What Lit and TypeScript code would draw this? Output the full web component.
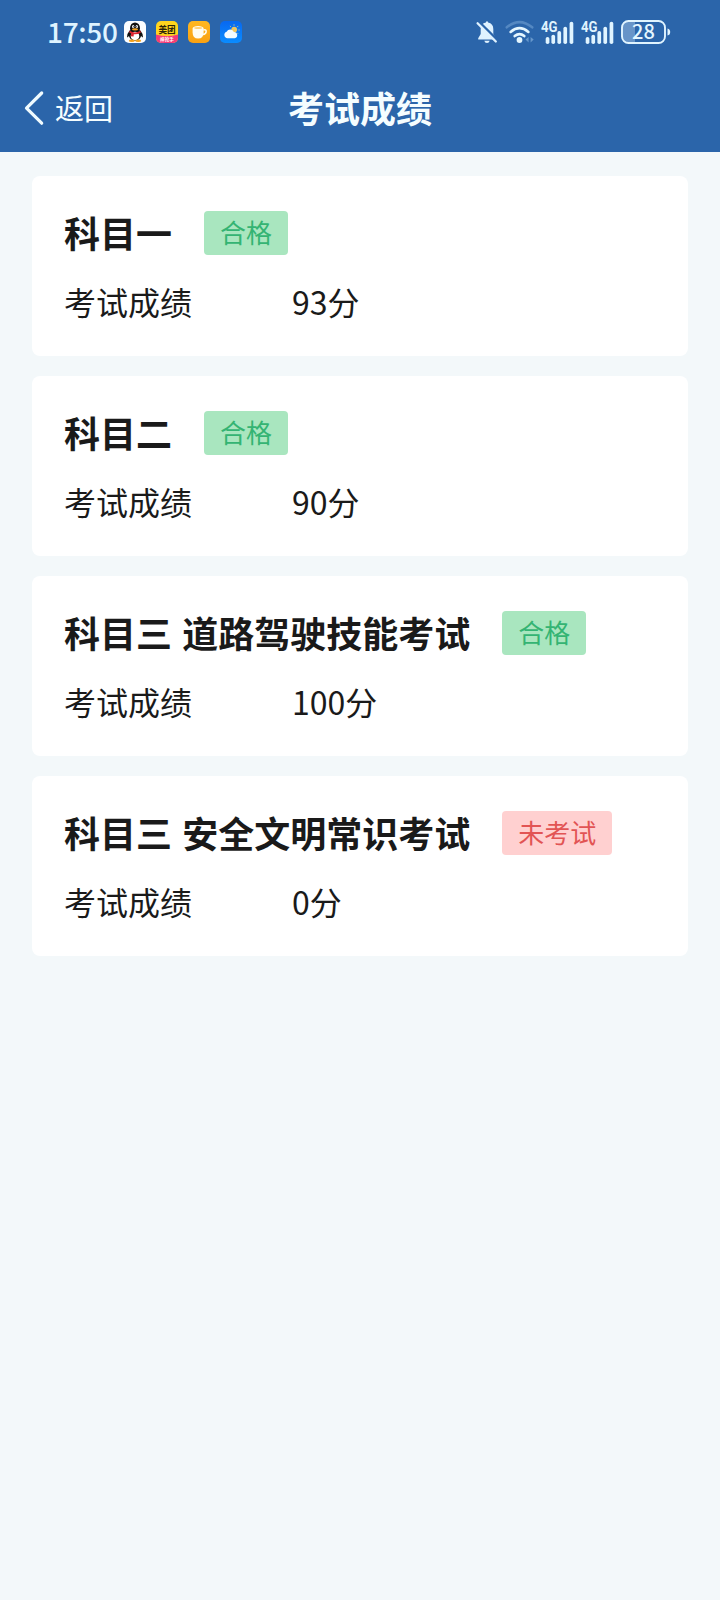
import { LitElement, html, svg, css } from "lit";
import { customElement, property } from "lit/decorators.js";

interface Exam {
  subject: string;
  status: string;
  passed: boolean;
  score: number;
}

const exams: Exam[] = [
  { subject: "科目一", status: "合格", passed: true, score: 93 },
  { subject: "科目二", status: "合格", passed: true, score: 90 },
  { subject: "科目三 道路驾驶技能考试", status: "合格", passed: true, score: 100 },
  { subject: "科目三 安全文明常识考试", status: "未考试", passed: false, score: 0 },
];

const qqIcon = html`<svg width="22" height="22" viewBox="0 0 22 22">
  <rect width="22" height="22" rx="5" fill="#fbfdff" />
  <path d="M5.600 9.500 Q2.600 13 3 16.500 Q4.500 16.200 5.200 14.500 L16.800 14.500 Q17.600 16.200 19 16.500 Q19.400 13 16.400 9.500Z" fill="#111" />
  <ellipse cx="11" cy="13.800" rx="6.200" ry="6" fill="#111" />
  <ellipse cx="11" cy="7.200" rx="5" ry="5.800" fill="#111" />
  <ellipse cx="11" cy="15" rx="4.300" ry="4.300" fill="#fff" />
  <ellipse cx="9.200" cy="5.600" rx="1.150" ry="1.600" fill="#fff" />
  <ellipse cx="12.800" cy="5.600" rx="1.150" ry="1.600" fill="#fff" />
  <circle cx="9.500" cy="5.800" r=".55" fill="#111" />
  <circle cx="12.500" cy="5.800" r=".55" fill="#111" />
  <ellipse cx="11" cy="8.400" rx="3.100" ry="1.100" fill="#f4a21c" />
  <path d="M5.600 9.800 Q11 13.200 16.400 9.800 L16.700 11.700 Q13.500 13.600 9.800 13.200 L9.600 15.600 L6.800 15.200 L7.200 12.500 Q6 12.100 5.300 11.600Z" fill="#dc2430" />
  <ellipse cx="7.800" cy="19.700" rx="3" ry="1.200" fill="#f4a21c" />
  <ellipse cx="14.200" cy="19.700" rx="3" ry="1.200" fill="#f4a21c" />
</svg>`;

const meituanIcon = html`<svg width="22" height="22" viewBox="0 0 22 22">
  <defs><clipPath id="tile"><rect width="22" height="22" rx="5" /></clipPath></defs>
  <g clip-path="url(#tile)">
    <rect width="22" height="22" fill="#ffd51e" />
    <path d="M0 13.500 Q11 16.500 22 13.500 V22 H0Z" fill="#f53a78" />
  </g>
  <text class="glyph" x="11" y="12" font-size="8.600" font-weight="700" text-anchor="middle" fill="#2b2308">美团</text>
  <text class="glyph" x="11" y="20.400" font-size="4.600" font-weight="700" text-anchor="middle" fill="#fff">神抢手</text>
</svg>`;

const cupIcon = html`<svg width="22" height="22" viewBox="0 0 22 22">
  <defs><linearGradient id="amber" x1="0" y1="0" x2="0" y2="1">
    <stop offset="0" stop-color="#ffb822" /><stop offset="1" stop-color="#f9a112" />
  </linearGradient></defs>
  <rect width="22" height="22" rx="5" fill="url(#amber)" />
  <path d="M4.600 7.500 H15.600 V11.500 Q15.600 17.600 10.100 17.600 Q4.600 17.600 4.600 11.500Z" fill="#fffdf2" />
  <ellipse cx="10.100" cy="7.200" rx="5.500" ry="2.200" fill="#fffdf2" />
  <ellipse cx="10.100" cy="7.100" rx="4" ry="1" fill="#ffd27a" />
  <path d="M15.300 9 Q18.300 8.300 18.200 10.400 Q18.100 13 14.800 13.600" fill="none" stroke="#fffdf2" stroke-width="1.500" />
</svg>`;

const weatherIcon = html`<svg width="22" height="22" viewBox="0 0 22 22">
  <defs><linearGradient id="sky" x1="0" y1="0" x2="0" y2="1">
    <stop offset="0" stop-color="#0868f0" /><stop offset="1" stop-color="#0a8cff" />
  </linearGradient></defs>
  <rect width="22" height="22" rx="5" fill="url(#sky)" />
  <g stroke="#d9bf7a" stroke-width=".9" stroke-linecap="round">
    <path d="M14 3.700v.6M18 5.200l-.5.500M19.300 9h-.6M17.800 12.500l-.4-.4M10.200 5.200l.4.400" />
  </g>
  <circle cx="14.200" cy="8.600" r="2.900" fill="#efc661" />
  <path d="M7.500 17.300 A3.400 3.400 0 0 1 6.600 10.700 A4.100 4.100 0 0 1 13.900 11 A3.200 3.200 0 0 1 14.800 17.300Z" fill="#f4fbff" />
</svg>`;

const mutedBell = html`<svg class="bell" width="22" height="24" viewBox="0 0 22 24">
  <path d="M11 1.200 Q11.900 1.200 12.100 2.400 Q17.300 3.400 17.300 9 V14 L19.800 18.200 V19.400 H2.200 V18.200 L4.700 14 V9 Q4.700 3.400 9.900 2.400 Q10.100 1.200 11 1.200Z" fill="#dff2ff" />
  <path d="M8.300 20.800 H13.700 Q13.200 23 11 23 Q8.800 23 8.300 20.800Z" fill="#dff2ff" />
  <path d="M2.800 1.600 L22 20.600" stroke="#2b65aa" stroke-width="2.600" />
  <path d="M1.600 3.200 L19.800 21.500" stroke="#dff2ff" stroke-width="2.300" stroke-linecap="round" />
</svg>`;

const wifiIcon = html`<svg class="wifi" width="30" height="24" viewBox="0 0 30 24">
  <g fill="none" stroke-linecap="round" stroke-width="2.600">
    <path d="M1.800 7.300 Q14.500 -3.200 27.200 7.300" stroke="#5488c2" />
    <path d="M5.600 11.900 Q14.500 4.300 23.400 11.900" stroke="#e4f6ff" />
    <path d="M9.700 16.100 Q14.500 12 19.300 16.100" stroke="#e4f6ff" />
  </g>
  <circle cx="14.500" cy="20" r="2.900" fill="#e4f6ff" />
  <path d="M23.600 17 V22.600 L20.500 19.600Z M25.600 17 V22.600 L28.700 19.600Z" fill="#6697cb" />
</svg>`;

const signalBars = [
  [4.7, 17], [10.4, 14.8], [16.4, 11], [22.4, 6.8], [28.6, 1.8],
];

const signalIcon = () => html`<svg class="signal" width="34" height="25" viewBox="0 0 34 25">
  ${signalBars.map(([x, y]) => svg`<rect x=${x} y=${y} width="3.700" height=${24 - y} rx="1.800" fill="#e0f4ff" />`)}
  <text class="network" x="0" y="11.700" font-size="14" fill="#e0f4ff" textLength="16.500" lengthAdjust="spacingAndGlyphs">4G</text>
</svg>`;

const batteryIcon = html`<svg class="battery" width="52" height="26" viewBox="0 0 52 26">
  <path d="M8.500 2 H15 V24 H8.500 Q2 24 2 17.500 V8.500 Q2 2 8.500 2Z" fill="#6794c8" />
  <rect x="2" y="2" width="43" height="22" rx="6.500" fill="none" stroke="#e0f4ff" stroke-width="1.900" />
  <path d="M47.500 9.500 Q50.200 10 50.200 13 Q50.200 16 47.500 16.500Z" fill="#e0f4ff" />
  <text class="glyph" x="23.500" y="20.200" font-size="20" font-weight="500" text-anchor="middle" fill="#e4f6ff">28</text>
</svg>`;

@customElement("status-bar")
class StatusBar extends LitElement {
  static styles = css`
    :host {
      display: flex;
      align-items: center;
      box-sizing: border-box;
      height: 64px;
      padding: 0 48px 0 46px;
      color: #dff3ff;
    }
    svg { display: block; flex: none; overflow: visible; }
    .time { box-sizing: border-box; width: 78px; padding: 0 0 2px 1px; font-size: 28px; line-height: 40px; font-weight: 500; letter-spacing: -0.3px; white-space: nowrap; }
    .apps { display: flex; gap: 10px; }
    .system { display: flex; align-items: center; margin-left: auto; }
    .wifi { margin-left: 7px; }
    .signal { margin-left: 6px; }
    .battery { margin-left: 5px; }
    .glyph { font-family: "Noto Sans CJK SC", sans-serif; }
    .network { font-family: "Roboto", sans-serif; font-weight: 700; }
  `;
  render() {
    return html`
      <span class="time">17:50</span>
      <div class="apps">${qqIcon}${meituanIcon}${cupIcon}${weatherIcon}</div>
      <div class="system">
        ${mutedBell}${wifiIcon}${signalIcon()}${signalIcon()}${batteryIcon}
      </div>
    `;
  }
}

@customElement("nav-bar")
class NavBar extends LitElement {
  static styles = css`
    :host {
      display: grid;
      grid-template-columns: 1fr auto 1fr;
      align-items: center;
      height: 88px;
      color: #f5fdff;
    }
    .back { display: flex; align-items: center; padding-left: 23px; font-size: 29px; line-height: 44px; }
    .back-label { padding-bottom: 3px; }
    .chevron { display: block; margin-right: 11px; }
    .title { margin: 0; padding-bottom: 3px; font-size: 36px; line-height: 52px; font-weight: 700; }
  `;
  render() {
    return html`
      <div class="back">
        <svg class="chevron" width="21" height="36" viewBox="0 0 21 36">
          <path d="M18.700 3 L3.500 18.200 L18.700 33.200" fill="none" stroke="#f0fbff" stroke-width="3.200" stroke-linecap="round" stroke-linejoin="round" />
        </svg>
        <span class="back-label">返回</span>
      </div>
      <h1 class="title">考试成绩</h1>
    `;
  }
}

@customElement("exam-card")
class ExamCard extends LitElement {
  @property({ attribute: false }) exam!: Exam;

  static styles = css`
    :host {
      display: block;
      box-sizing: border-box;
      height: 180px;
      padding: 31px 32px;
      border-radius: 8px;
      background: #fff;
      color: #1a1a1a;
    }
    .head { display: flex; align-items: center; gap: 32px; height: 52px; }
    .subject { margin: 0; padding-bottom: 2px; font-size: 36px; line-height: 52px; font-weight: 700; word-spacing: 2px; white-space: nowrap; }
    .tag {
      padding: 0 16px 2px;
      border-radius: 4px;
      font-size: 26px;
      line-height: 42px;
    }
    .pass { background: #a9e6bf; color: #34b473; }
    .pending { background: #ffd0d0; color: #e25454; }
    .row { display: flex; margin-top: 18px; font-size: 32px; line-height: 48px; }
    .label { width: 228px; }
  `;
  render() {
    const { subject, status, passed, score } = this.exam;
    return html`
      <div class="head">
        <h2 class="subject">${subject}</h2>
        <span class="tag ${passed ? "pass" : "pending"}">${status}</span>
      </div>
      <div class="row"><span class="label">考试成绩</span><span>${score}分</span></div>
    `;
  }
}

@customElement("app-root")
class AppRoot extends LitElement {
  static styles = css`
    :host {
      display: block;
      min-height: 100vh;
      background: #f3f8fa;
      font-family: "Noto Sans CJK SC", sans-serif;
    }
    .top { background: #2b65aa; }
    .list { display: flex; flex-direction: column; gap: 20px; padding: 24px 32px; }
  `;
  render() {
    return html`
      <header class="top">
        <status-bar></status-bar>
        <nav-bar></nav-bar>
      </header>
      <main class="list">
        ${exams.map((exam) => html`<exam-card .exam=${exam}></exam-card>`)}
      </main>
    `;
  }
}
